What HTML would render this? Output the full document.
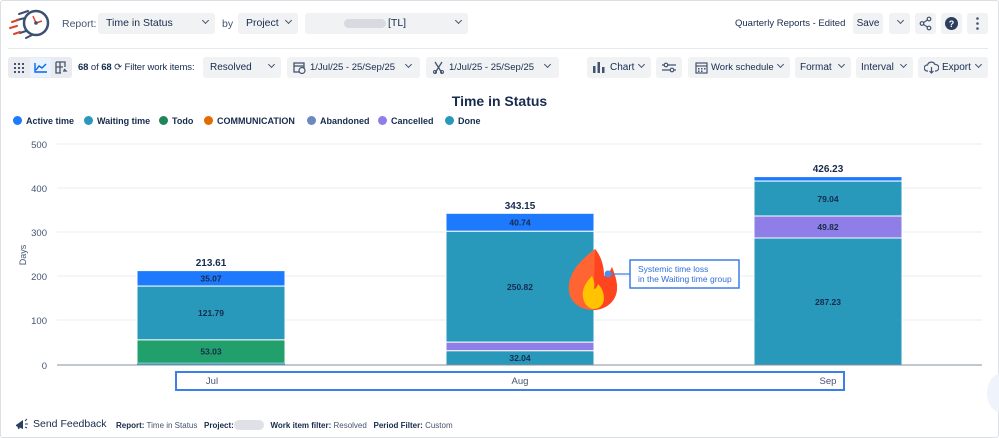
<!DOCTYPE html>
<html><head><meta charset="utf-8"><style>
*{box-sizing:border-box;margin:0;padding:0}
body{width:999px;height:438px;background:#fff;font-family:"Liberation Sans",sans-serif;color:#172b4d;position:relative;overflow:hidden;font-size:10px;white-space:nowrap}
.frame{position:absolute;left:0;top:0;width:999px;height:438px;border:1px solid #dcdfe4;border-radius:3px}
.a{position:absolute}
.sel{position:absolute;background:#f1f2f4;border-radius:3px;height:21px;line-height:21px;font-size:10.5px;color:#172b4d;padding-left:8px}
.chev{position:absolute;right:7px;top:0;font-size:9px}
.chev:after{content:"";display:inline-block;width:4px;height:4px;border-right:1.5px solid #44546f;border-bottom:1.5px solid #44546f;transform:rotate(45deg);margin-bottom:3px}
.btn{position:absolute;background:#f1f2f4;border-radius:3px;height:21px;top:57px;line-height:21px;font-size:10px}
.lg{position:absolute;top:116px;font-size:9px;font-weight:bold;color:#172b4d}
.lg i{display:inline-block;width:9px;height:9px;border-radius:50%;margin-right:4px;vertical-align:-1px}
</style></head><body>
<div class="frame"></div>
<svg class="a" style="left:8px;top:8px" width="44" height="34" viewBox="0 0 44 34">
<circle cx="28" cy="15" r="12" fill="#fff" stroke="#3d4f73" stroke-width="2.5"/>
<line x1="28" y1="15" x2="25" y2="8" stroke="#e0412b" stroke-width="1.5"/>
<line x1="28" y1="15" x2="34" y2="13" stroke="#e0412b" stroke-width="1.5"/>
<circle cx="28" cy="15" r="1.8" fill="#3d4f73"/>
<path d="M11 6 L20 3 M9 12 L17 10 M18 30 L24 27 M12 25 L18 23" stroke="#3d4f73" stroke-width="2" stroke-linecap="round"/>
<path d="M4 14 L10 12 M2 20 L9 18 M6 26 L12 24" stroke="#e0412b" stroke-width="2" stroke-linecap="round"/>
</svg>
<div class="a" style="left:62px;top:18px;font-size:10.5px;color:#44546f">Report:</div>
<div class="sel" style="left:98px;top:13px;width:117px">Time in Status<span class="chev"></span></div>
<div class="a" style="left:222px;top:18px;font-size:10.5px;color:#44546f">by</div>
<div class="sel" style="left:238px;top:13px;width:60px">Project<span class="chev"></span></div>
<div class="sel" style="left:305px;top:13px;width:163px"><span class="a" style="left:39px;top:6px;width:42px;height:9px;background:#d8dadf;border-radius:5px"></span><span class="a" style="left:83px;top:0">[TL]</span><span class="chev"></span></div>
<div class="a" style="left:735px;top:18px;font-size:9.5px">Quarterly Reports - Edited</div>
<div class="btn" style="left:853px;top:13px;width:30px;text-align:center;font-size:10px">Save</div>
<div class="btn" style="left:889px;top:13px;width:21px"><span class="chev" style="right:7px"></span></div>
<div class="btn" style="left:915px;top:13px;width:21px"><svg width="21" height="21"><circle cx="14" cy="6" r="1.8" fill="none" stroke="#44546f" stroke-width="1.2"/><circle cx="7" cy="10.5" r="1.8" fill="none" stroke="#44546f" stroke-width="1.2"/><circle cx="14" cy="15" r="1.8" fill="none" stroke="#44546f" stroke-width="1.2"/><path d="M8.5 9.5 L12.5 7 M8.5 11.5 L12.5 14" stroke="#44546f" stroke-width="1.2"/></svg></div>
<div class="btn" style="left:941px;top:13px;width:21px"><svg width="21" height="21"><circle cx="10.5" cy="10.5" r="6.5" fill="#2c3e5d"/><text x="10.5" y="14" text-anchor="middle" font-size="9" font-weight="bold" fill="#fff" font-family="Liberation Sans">?</text></svg></div>
<div class="btn" style="left:967px;top:13px;width:21px"><svg width="21" height="21"><circle cx="10.5" cy="5.5" r="1.3" fill="#44546f"/><circle cx="10.5" cy="10.5" r="1.3" fill="#44546f"/><circle cx="10.5" cy="15.5" r="1.3" fill="#44546f"/></svg></div>
<div class="a" style="left:8px;top:48px;width:980px;height:1px;background:#e6e8ec"></div>
<div class="btn" style="left:8px;width:64px;background:#e9ebee"></div>
<div class="a" style="left:30px;top:58px;width:21px;height:19px;background:#e9f2ff"></div>
<svg class="a" style="left:8px;top:57px" width="64" height="21">
<g fill="#44546f"><rect x="6" y="6" width="2" height="2"/><rect x="10" y="6" width="2" height="2"/><rect x="14" y="6" width="2" height="2"/><rect x="6" y="10" width="2" height="2"/><rect x="10" y="10" width="2" height="2"/><rect x="14" y="10" width="2" height="2"/><rect x="6" y="14" width="2" height="2"/><rect x="10" y="14" width="2" height="2"/><rect x="14" y="14" width="2" height="2"/></g>
<path d="M27 6 V15 H39 M28 13 L31 9 L34 11 L38 7" fill="none" stroke="#0c66e4" stroke-width="1.4"/>
<path d="M48 5 H57 V10 M48 5 V16 H53 M48 10 H55 M52 5 V16 M55 14 H58 L56 12" fill="none" stroke="#44546f" stroke-width="1.3"/>
</svg>
<div class="a" style="left:78px;top:62px;font-size:9.5px;letter-spacing:-0.1px"><b>68</b> of <b>68</b> ⟳ Filter work items:</div>
<div class="btn" style="left:203px;width:78px;padding-left:7px">Resolved<span class="chev"></span></div>
<div class="btn" style="left:287px;width:133px;padding-left:23px;font-size:9.5px"><svg class="a" style="left:6px;top:4px" width="13" height="13"><rect x="1" y="2" width="10" height="9" fill="none" stroke="#44546f" stroke-width="1.3"/><line x1="1" y1="5" x2="11" y2="5" stroke="#44546f" stroke-width="1.3"/><circle cx="9" cy="9.5" r="3" fill="#f1f2f4" stroke="#44546f" stroke-width="1.2"/></svg>1/Jul/25 - 25/Sep/25<span class="chev" style="right:9px"></span></div>
<div class="btn" style="left:426px;width:133px;padding-left:23px;font-size:9.5px"><svg class="a" style="left:6px;top:4px" width="13" height="13"><path d="M3 1 L10 12 M10 1 L3 12" stroke="#44546f" stroke-width="1.3"/><circle cx="3" cy="11" r="1.5" fill="none" stroke="#44546f"/><circle cx="10" cy="11" r="1.5" fill="none" stroke="#44546f"/></svg>1/Jul/25 - 25/Sep/25<span class="chev" style="right:9px"></span></div>
<div class="btn" style="left:587px;width:64px;padding-left:23px"><svg class="a" style="left:6px;top:5px" width="12" height="11"><rect x="0" y="4" width="2.5" height="7" fill="#44546f"/><rect x="4.5" y="0" width="2.5" height="11" fill="#44546f"/><rect x="9" y="5" width="2.5" height="6" fill="#44546f"/></svg>Chart<span class="chev"></span></div>
<div class="btn" style="left:656px;width:26px"><svg class="a" style="left:6px;top:5px" width="14" height="11"><path d="M0 3 H14 M0 8 H14" stroke="#44546f" stroke-width="1.2"/><circle cx="4" cy="3" r="1.8" fill="#f1f2f4" stroke="#44546f" stroke-width="1.2"/><circle cx="10" cy="8" r="1.8" fill="#f1f2f4" stroke="#44546f" stroke-width="1.2"/></svg></div>
<div class="btn" style="left:688px;width:102px;padding-left:23px;font-size:9.5px"><svg class="a" style="left:7px;top:4px" width="13" height="13"><rect x="1" y="2" width="11" height="10" fill="none" stroke="#44546f" stroke-width="1.2"/><line x1="1" y1="5" x2="12" y2="5" stroke="#44546f" stroke-width="1.2"/><g fill="#44546f"><rect x="3" y="7" width="1.5" height="1.5"/><rect x="6" y="7" width="1.5" height="1.5"/><rect x="9" y="7" width="1.5" height="1.5"/><rect x="3" y="9.5" width="1.5" height="1.5"/><rect x="6" y="9.5" width="1.5" height="1.5"/></g></svg>Work schedule<span class="chev"></span></div>
<div class="btn" style="left:795px;width:56px;padding-left:5px">Format<span class="chev"></span></div>
<div class="btn" style="left:856px;width:57px;padding-left:5px">Interval<span class="chev"></span></div>
<div class="btn" style="left:918px;width:70px;padding-left:24px"><svg class="a" style="left:6px;top:4px" width="15" height="13"><path d="M4 10 H3 A3 3 0 0 1 3.5 4 A4 4 0 0 1 11 3.5 A3 3 0 0 1 12 10 H11 M7.5 6 V12 M5.5 10 L7.5 12 L9.5 10" fill="none" stroke="#44546f" stroke-width="1.2"/></svg>Export<span class="chev"></span></div>
<div class="a" style="left:0;width:999px;top:93px;text-align:center;font-size:14px;font-weight:bold;color:#172b4d">Time in Status</div>
<div class="lg" style="left:13px"><i style="background:#1d7afc"></i>Active time</div>
<div class="lg" style="left:84px"><i style="background:#2898bd"></i>Waiting time</div>
<div class="lg" style="left:159px"><i style="background:#1f845a"></i>Todo</div>
<div class="lg" style="left:204px"><i style="background:#e06c00"></i>COMMUNICATION</div>
<div class="lg" style="left:307px"><i style="background:#6b88c0"></i>Abandoned</div>
<div class="lg" style="left:378px"><i style="background:#8f7ee7"></i>Cancelled</div>
<div class="lg" style="left:445px"><i style="background:#2898bd"></i>Done</div>
<svg class="a" style="left:0;top:0" width="999" height="438" font-family="Liberation Sans">
<g stroke="#ebecf0" stroke-width="1"><line x1="57" y1="144" x2="982" y2="144"/><line x1="57" y1="188" x2="982" y2="188"/><line x1="57" y1="232" x2="982" y2="232"/><line x1="57" y1="276" x2="982" y2="276"/><line x1="57" y1="320" x2="982" y2="320"/></g>
<g font-size="9.5" fill="#44546f" text-anchor="end"><text x="47" y="148">500</text><text x="47" y="192">400</text><text x="47" y="236">300</text><text x="47" y="280">200</text><text x="47" y="324">100</text><text x="47" y="369">0</text></g>
<text transform="translate(26,255) rotate(-90)" font-size="9" fill="#44546f" text-anchor="middle">Days</text>
<g stroke="#fff" stroke-width="1">
<rect x="137" y="270.6" width="148" height="15.5" fill="#1d7afc"/>
<rect x="137" y="286.1" width="148" height="53.8" fill="#2898bb"/>
<rect x="137" y="339.9" width="148" height="23.4" fill="#22a06b"/>
<rect x="137" y="363.3" width="148" height="1.7" fill="#2898bb" stroke="none"/>
<rect x="446" y="213.3" width="148" height="18" fill="#1d7afc"/>
<rect x="446" y="231.3" width="148" height="110.9" fill="#2898bb"/>
<rect x="446" y="342.2" width="148" height="8.6" fill="#8f7ee7"/>
<rect x="446" y="350.8" width="148" height="14.2" fill="#2898bb"/>
<rect x="754" y="176.6" width="148" height="4.5" fill="#1d7afc"/>
<rect x="754" y="181.1" width="148" height="34.9" fill="#2898bb"/>
<rect x="754" y="216" width="148" height="22" fill="#8f7ee7"/>
<rect x="754" y="238" width="148" height="127" fill="#2898bb"/>
</g>
<line x1="57" y1="365" x2="982" y2="365" stroke="#8590a2" stroke-width="1"/>
<g font-size="8.5" font-weight="bold" fill="#172b4d" text-anchor="middle">
<text x="211" y="281.5">35.07</text><text x="211" y="316">121.79</text><text x="211" y="354.5">53.03</text>
<text x="520" y="225.5">40.74</text><text x="520" y="290">250.82</text><text x="520" y="361">32.04</text>
<text x="828" y="202">79.04</text><text x="828" y="230">49.82</text><text x="828" y="305">287.23</text>
</g>
<g font-size="10" font-weight="bold" fill="#172b4d" text-anchor="middle"><text x="211" y="266">213.61</text><text x="520" y="209">343.15</text><text x="828" y="172">426.23</text></g>
<rect x="176" y="372" width="668" height="18" fill="none" stroke="#3d7fe8" stroke-width="2"/>
<g font-size="9.5" fill="#44546f" text-anchor="middle"><text x="212" y="384">Jul</text><text x="520" y="384">Aug</text><text x="828" y="384">Sep</text></g>
<path d="M595 249 C578 262 567 275 569 292 C571 304 582 310 593 310 C606 310 617 301 617 288 C617 279 614 273 612 267 C610 272 607 275 604 276 C604 266 601 256 595 249 Z" fill="#ff6433"/>
<path d="M595 249 C601 256 604 266 604 276 C607 275 610 272 612 267 C614 273 617 279 617 288 C617 301 606 310 593 310 Z" fill="#ff4520"/>
<path d="M592 276 C584 284 582 291 583 297 C584 305 590 309 594 309 C600 309 604 304 604 298 C604 292 601 287 598 284 C597 288 595 289 594 289 C595 284 594 280 592 276 Z" fill="#ffc300"/>
<line x1="608" y1="274" x2="630" y2="274" stroke="#3d7fe8" stroke-width="1.2"/>
<circle cx="608" cy="274" r="3.5" fill="#4b8df0"/>
<rect x="630" y="260" width="109" height="28" fill="#fff" stroke="#3d7fe8" stroke-width="1.5"/>
<g font-size="8.5" fill="#2f6fd8"><text x="638" y="272">Systemic time loss</text><text x="638" y="282">in the Waiting time group</text></g>
</svg>
<div class="a" style="left:987px;top:373px;width:30px;height:40px;border-radius:50%;background:#eef3fc"></div>
<svg class="a" style="left:15px;top:418px" width="14" height="12"><path d="M1 7 L8 2 V11 L1 8 Z" fill="#2c3e5d"/><path d="M3 8 L4 11" stroke="#2c3e5d" stroke-width="1.5"/><path d="M10 3 L12 1 M10 6 H13 M10 9 L12 10" stroke="#2c3e5d" stroke-width="1"/></svg>
<div class="a" style="left:33px;top:418px;font-size:10.5px;color:#172b4d">Send Feedback</div>
<div class="a" style="left:116px;top:420px;font-size:8px;color:#44546f"><b style="color:#172b4d">Report:</b> Time in Status &nbsp;&nbsp;<b style="color:#172b4d">Project:</b><span style="display:inline-block;width:30px;height:10px;background:#dfe1e6;border-radius:5px;vertical-align:-2px"></span>&nbsp;&nbsp;&nbsp;<b style="color:#172b4d">Work item filter:</b> Resolved &nbsp;&nbsp;<b style="color:#172b4d">Period Filter:</b> Custom</div>
</body></html>
